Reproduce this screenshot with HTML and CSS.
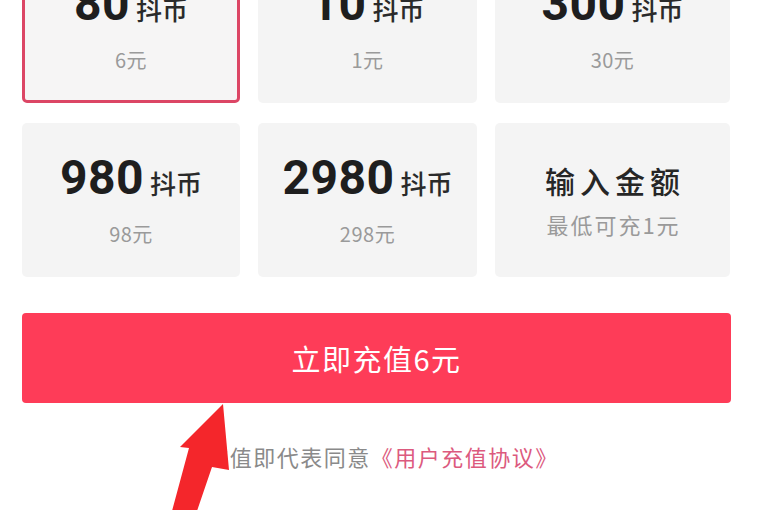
FILE: index.html
```html
<!DOCTYPE html>
<html lang="zh-CN">
<head>
<meta charset="utf-8">
<title>充值</title>
<link rel="stylesheet" href="styles.css">
</head>
<body>
<main class="page">
  <section class="grid">
    <div class="card selected">
      <div class="num">80<span class="unit">抖币</span></div>
      <div class="sub">6元</div>
    </div>
    <div class="card">
      <div class="num">10<span class="unit">抖币</span></div>
      <div class="sub">1元</div>
    </div>
    <div class="card">
      <div class="num">300<span class="unit">抖币</span></div>
      <div class="sub">30元</div>
    </div>
    <div class="card">
      <div class="num">980<span class="unit">抖币</span></div>
      <div class="sub">98元</div>
    </div>
    <div class="card">
      <div class="num">2980<span class="unit">抖币</span></div>
      <div class="sub">298元</div>
    </div>
    <div class="card custom">
      <div class="title">输入金额</div>
      <div class="sub sub-custom">最低可充1元</div>
    </div>
  </section>
  <button class="pay">立即充值6元</button>
  <p class="agree">充值即代表同意<span class="link">《用户充值协议》</span></p>
</main>
<svg class="arrow" width="768" height="510" viewBox="0 0 768 510" aria-hidden="true">
  <polygon points="223,404 180,447 189,448 172,511 197,511 212,467 229,470" fill="#f4262b"/>
</svg>
</body>
</html>
```
FILE: styles.css
```css
html, body {
  margin: 0;
  padding: 0;
  background: #ffffff;
  overflow: hidden;
}
body {
  width: 768px;
  height: 510px;
  position: relative;
  font-family: "Noto Sans CJK SC", "Noto Sans", sans-serif;
}
.page {
  padding-left: 22px;
  width: 709px;
}
.grid {
  margin-top: -51px;
  display: grid;
  grid-template-columns: 218px 219px 235px;
  grid-auto-rows: 154px;
  column-gap: 18px;
  row-gap: 20px;
}
.card {
  background: #f4f4f4;
  border-radius: 5px;
  display: flex;
  flex-direction: column;
  align-items: center;
  padding-top: 27px;
  box-sizing: border-box;
}
.card.selected {
  border: 3px solid #dc4665;
  padding-top: 24px;
  background: #f6f5f5;
}
.num {
  font-family: Roboto, "Noto Sans CJK SC", sans-serif;
  font-weight: 700;
  font-size: 48px;
  line-height: 56px;
  color: #1e1e1e;
  letter-spacing: 0.5px;
}
.unit {
  font-family: "Noto Sans CJK SC", sans-serif;
  font-size: 26px;
  font-weight: 500;
  color: #2a2a2a;
  margin-left: 6px;
  letter-spacing: 0;
}
.sub {
  margin-top: 11px;
  font-size: 20px;
  line-height: 24px;
  color: #9a9a9a;
  letter-spacing: 0.5px;
}
.card.custom {
  padding-top: 37px;
}
.title {
  font-size: 30px;
  line-height: 40px;
  color: #262626;
  font-weight: 500;
  letter-spacing: 5px;
  margin-right: -5px;
}
.sub-custom {
  margin-top: 11px;
  font-size: 22px;
  line-height: 26px;
  letter-spacing: 2px;
  margin-right: -2px;
}
.pay {
  display: block;
  width: 709px;
  height: 90px;
  margin-top: 36px;
  border: none;
  border-radius: 4px;
  background: #fe3c58;
  color: #ffffff;
  font-family: "Noto Sans CJK SC", sans-serif;
  font-size: 29px;
  letter-spacing: 1.5px;
  padding: 0;
}
.agree {
  margin: 38px 0 0 0;
  text-align: center;
  font-size: 22px;
  line-height: 30px;
  color: #8a8a8a;
  letter-spacing: 1.5px;
  padding-left: 12px;
}
.link {
  color: #dc5a7e;
}
.arrow {
  position: absolute;
  left: 0;
  top: 0;
  pointer-events: none;
}
```
